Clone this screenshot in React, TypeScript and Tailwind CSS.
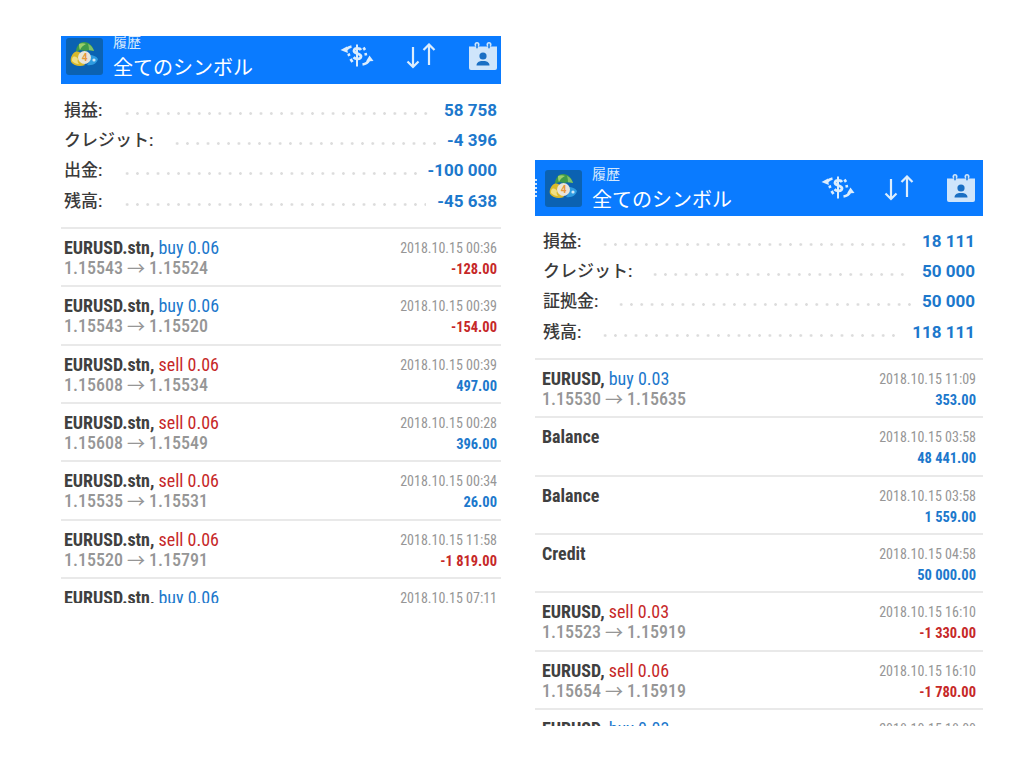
const jp = "font-['Roboto','Noto_Sans_CJK_JP',sans-serif]";

type Stat = { label: string; value: string; labelW: string };
type Row = { sym: string; side?: string; from?: string; to?: string; time: string; amount: string };

const leftStats: Stat[] = [
  { label: "損益:", value: "58 758", labelW: "w-[58px]" },
  { label: "クレジット:", value: "-4 396", labelW: "w-[108px]" },
  { label: "出金:", value: "-100 000", labelW: "w-[58px]" },
  { label: "残高:", value: "-45 638", labelW: "w-[58px]" },
];

const rightStats: Stat[] = [
  { label: "損益:", value: "18 111", labelW: "w-[57px]" },
  { label: "クレジット:", value: "50 000", labelW: "w-[107px]" },
  { label: "証拠金:", value: "50 000", labelW: "w-[73px]" },
  { label: "残高:", value: "118 111", labelW: "w-[57px]" },
];

const leftRows: Row[] = [
  { sym: "EURUSD.stn,", side: "buy 0.06", from: "1.15543", to: "1.15524", time: "2018.10.15 00:36", amount: "-128.00" },
  { sym: "EURUSD.stn,", side: "buy 0.06", from: "1.15543", to: "1.15520", time: "2018.10.15 00:39", amount: "-154.00" },
  { sym: "EURUSD.stn,", side: "sell 0.06", from: "1.15608", to: "1.15534", time: "2018.10.15 00:39", amount: "497.00" },
  { sym: "EURUSD.stn,", side: "sell 0.06", from: "1.15608", to: "1.15549", time: "2018.10.15 00:28", amount: "396.00" },
  { sym: "EURUSD.stn,", side: "sell 0.06", from: "1.15535", to: "1.15531", time: "2018.10.15 00:34", amount: "26.00" },
  { sym: "EURUSD.stn,", side: "sell 0.06", from: "1.15520", to: "1.15791", time: "2018.10.15 11:58", amount: "-1 819.00" },
  { sym: "EURUSD.stn,", side: "buy 0.06", time: "2018.10.15 07:11", amount: "" },
];

const rightRows: Row[] = [
  { sym: "EURUSD,", side: "buy 0.03", from: "1.15530", to: "1.15635", time: "2018.10.15 11:09", amount: "353.00" },
  { sym: "Balance", time: "2018.10.15 03:58", amount: "48 441.00" },
  { sym: "Balance", time: "2018.10.15 03:58", amount: "1 559.00" },
  { sym: "Credit", time: "2018.10.15 04:58", amount: "50 000.00" },
  { sym: "EURUSD,", side: "sell 0.03", from: "1.15523", to: "1.15919", time: "2018.10.15 16:10", amount: "-1 330.00" },
  { sym: "EURUSD,", side: "sell 0.06", from: "1.15654", to: "1.15919", time: "2018.10.15 16:10", amount: "-1 780.00" },
  { sym: "EURUSD,", side: "buy 0.03", time: "2018.10.15 18:00", amount: "" },
];

function Logo() {
  return (
    <svg width="37" height="37" viewBox="0 0 37 37" className="shrink-0">
      <rect width="37" height="37" rx="3" fill="#0b62b2" />
      <path d="M18 4c5 0 9 4 10 9-3-1-6-1-9 0-3-1-6-1-9 1 0-5 3-10 8-10z" fill="#3f9b4a" />
      <path d="M13 6c2-1 5-1 7 0-2 1-5 3-6 6-1-2-1-4-1-6z" fill="#9ccf6a" />
      <path d="M22 6c3 1 5 4 6 7-2-.7-3.500-.9-5-.8 0-2.200-.3-4.200-1-6.200z" fill="#7fc06a" />
      <path d="M9 14c3-1 5 0 7 2-1 4 0 8 3 11-5 2-11 1-14-3-1-4 1-8 4-10z" fill="#d9b92c" />
      <path d="M7 19c2-1 4 0 5 2-1 2 0 4 1 5-3 0-5-1-7-3 0-2 0-3 1-4z" fill="#f0df84" />
      <path d="M24 17c3 0 6 1 8 4-1 4-5 7-11 6 2-2 3-5 3-10z" fill="#2e9be0" />
      <circle cx="18.500" cy="19.500" r="6.500" fill="#e9e4d8" />
      <text x="18.500" y="23" textAnchor="middle" fontSize="10" fontWeight="700" fill="#e8973a" fontFamily="Roboto, sans-serif">4</text>
      <circle cx="28" cy="22" r="1.600" fill="#cfe8f8" />
    </svg>
  );
}

function DollarIcon() {
  return (
    <svg width="34" height="24" viewBox="0 0 34 24" fill="none" stroke="#dcedfd" className="shrink-0">
      <path d="M21 6c-1-2-6.500-2.500-7 .6-.5 3 7.500 2.800 7 6-.5 3-5.500 2.800-7.500 .6" strokeWidth="2.800" />
      <path d="M17 .5v22" strokeWidth="2" />
      <path d="M11.500 2.500C9 3 7.500 4 6.500 5.500" strokeWidth="2.600" />
      <path d="M.5 6l6.500-3.500.8 6.500z" fill="#dcedfd" stroke="none" />
      <path d="M8.500 9.500l.8 2.500M10.500 15l2 3" strokeWidth="2.600" />
      <path d="M22.500 20.500c3-.5 5.500-2 6.500-4.500" strokeWidth="2.600" />
      <path d="M33.500 17l-7.500 .5 3.500-6z" fill="#dcedfd" stroke="none" />
      <path d="M23.500 3.500l1.500 2.500M25.500 9l.5 2.500" strokeWidth="2.600" />
    </svg>
  );
}

function SortIcon() {
  return (
    <svg width="32" height="26" viewBox="0 0 32 26" fill="none" stroke="#dcedfd" strokeWidth="2.200" className="shrink-0">
      <path d="M8 4v20M2.500 18.500L8 24l5.500-5.500" />
      <path d="M24 22V1.500M18.500 7L24 1.500 29.500 7" />
    </svg>
  );
}

function CalendarIcon() {
  return (
    <svg width="28" height="28" viewBox="0 0 28 28" className="shrink-0">
      <path d="M0 4.500h28v21.500a2 2 0 0 1-2 2H2a2 2 0 0 1-2-2z" fill="#cfe5fb" />
      <circle cx="8" cy="2.500" r="2.500" fill="#cfe5fb" />
      <circle cx="20" cy="2.500" r="2.500" fill="#cfe5fb" />
      <path d="M8 2.500v3M20 2.500v3" stroke="#2a86e8" strokeWidth="1.800" strokeLinecap="round" />
      <circle cx="14" cy="14" r="3.600" fill="#1a6fc4" />
      <path d="M7.500 23.500c0-3 2.500-4 4.500-4.500h4c2 .5 4.500 1.500 4.500 4.500z" fill="#1a6fc4" />
    </svg>
  );
}

function Titles() {
  return (
    <div className={`flex-1 pt-[3px] ${jp}`}>
      <div className="text-[14px] leading-[18px] text-[#d6e9fc]">履歴</div>
      <div className="mt-[3px] text-[20px] leading-[28px]">全てのシンボル</div>
    </div>
  );
}

function StatLine({ s }: { s: Stat }) {
  return (
    <div className="flex h-[30.3px] items-center">
      <span className={`${s.labelW} shrink-0 text-[17px] leading-none font-medium text-[#3a3a3a] ${jp}`}>{s.label}</span>
      <span className="mt-[6px] mr-[11px] h-[5px] flex-1 bg-[radial-gradient(circle,#dcdcdc_1.1px,transparent_1.6px)] bg-[length:10.300px_5px] bg-left bg-repeat-x" />
      <span className="text-[17px] leading-none font-bold text-[#1c78cc] font-['Roboto',sans-serif]">{s.value}</span>
    </div>
  );
}

function TradeRow({ r }: { r: Row }) {
  const sell = r.side?.startsWith("sell");
  const negative = r.amount.startsWith("-");
  return (
    <div className="flex justify-between pt-2 font-['Roboto',sans-serif] [font-stretch:75%]">
      <div className="text-[18px] leading-[21px]">
        <div className="h-[20px]">
          <span className="font-bold text-[#404040]">{r.sym}</span>
          {r.side && <span className={sell ? "text-[#c62828]" : "text-[#1c78cc]"}> {r.side}</span>}
        </div>
        {r.from && (
          <div className="flex h-[21px] items-center font-medium text-[#969696]">
            {r.from}
            <span className="mx-[4px] h-[21px] leading-[21px] font-normal font-['Noto_Sans_CJK_JP',sans-serif]">→</span>
            {r.to}
          </div>
        )}
      </div>
      <div className="pt-[1px] text-right">
        <div className="h-[21px] text-[14px] leading-[21px] text-[#969696]">{r.time}</div>
        <div className={`h-[21px] text-[14.500px] leading-[21px] font-bold ${negative ? "text-[#c62828]" : "text-[#1c78cc]"}`}>{r.amount}</div>
      </div>
    </div>
  );
}

export default function App() {
  return (
    <div className="flex h-[768px] w-[1024px] items-start gap-[34px] overflow-hidden bg-white pl-[61px]">
      <div className="mt-[36px] flex h-[567px] w-[440px] flex-col overflow-hidden">
        <div className="h-12 shrink-0 overflow-hidden bg-[#0a7bff]">
          <div className="-mt-2 flex h-14 items-center gap-[10px] pr-[4px] pl-[5px] text-white">
            <Logo />
            <Titles />
            <div className="mr-[21px]"><DollarIcon /></div>
            <div className="mr-[22px]"><SortIcon /></div>
            <CalendarIcon />
          </div>
        </div>
        <div className="h-[143px] shrink-0 pt-[11px] pr-1 pl-[3px]">
          {leftStats.map((s) => <StatLine key={s.label} s={s} />)}
        </div>
        {leftRows.map((r, i) => (
          <div key={i} className="h-[58.330px] shrink-0 border-t-2 border-[#e9e9e9] pr-1 pl-[3px]">
            <TradeRow r={r} />
          </div>
        ))}
      </div>

      <div className="mt-[160px] flex h-[566px] w-[448px] flex-col overflow-hidden">
        <div className="relative flex h-14 shrink-0 items-center gap-[10px] bg-[#0a7bff] pr-[8px] pl-[10px] text-white">
          <span className="absolute top-[19px] left-0 h-[18px] w-[2px] border-l-2 border-dotted border-white/80" />
          <Logo />
          <Titles />
          <div className="mr-[18px]"><DollarIcon /></div>
          <div className="mr-[22px]"><SortIcon /></div>
          <CalendarIcon />
        </div>
        <div className="h-[142px] shrink-0 pt-[10px] pr-2 pl-2">
          {rightStats.map((s) => <StatLine key={s.label} s={s} />)}
        </div>
        {rightRows.map((r, i) => (
          <div key={i} className="h-[58.330px] shrink-0 border-t-2 border-[#e9e9e9] px-[7px]">
            <TradeRow r={r} />
          </div>
        ))}
      </div>
    </div>
  );
}
